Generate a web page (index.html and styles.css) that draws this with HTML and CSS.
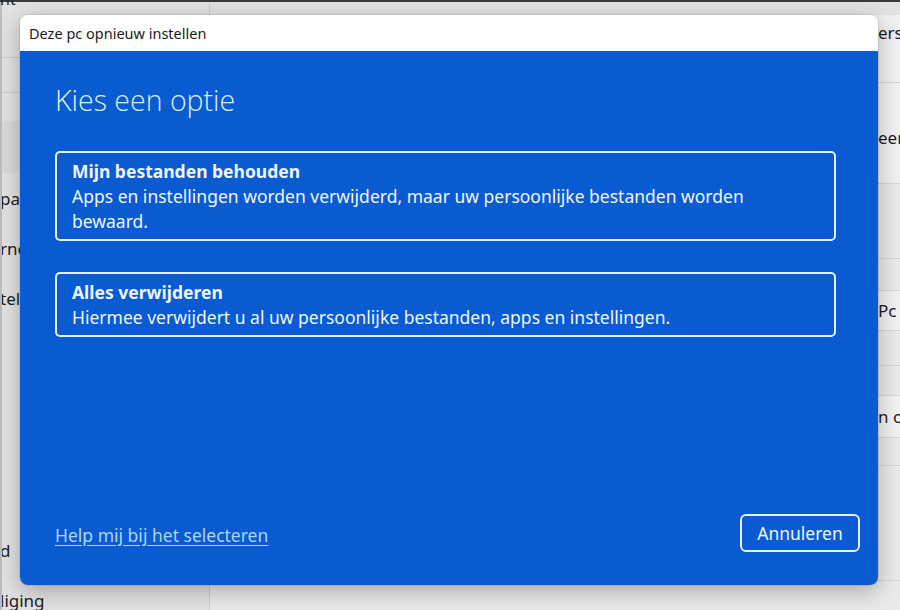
FILE: index.html
```html
<!DOCTYPE html>
<html lang="nl">
<head>
<meta charset="utf-8">
<title>Deze pc opnieuw instellen</title>
<link rel="stylesheet" href="styles.css">
</head>
<body>
<div class="page">
  <div class="topline"><span class="cut-top">nt</span></div>
  <div class="bg">
    <aside class="side">
      <div class="side-row h55"></div>
      <div class="side-row h36 line"></div>
      <div class="side-row h28"></div>
      <div class="side-row h52 band"></div>
      <div class="side-row h50"><span class="frag">pa</span></div>
      <div class="side-row h50"><span class="frag">rne</span></div>
      <div class="side-row h50"><span class="frag">tell</span></div>
      <div class="side-row h202"></div>
      <div class="side-row h50"><span class="frag">d</span></div>
      <div class="side-row h50"><span class="frag">liging</span></div>
    </aside>
    <main class="main">
      <div class="card h13 plain"></div>
      <div class="card h35"><span class="rfrag">erstellen</span></div>
      <div class="card h32"></div>
      <div class="card h33 sep"></div>
      <div class="card h45"><span class="rfrag">eem</span></div>
      <div class="card h23"></div>
      <div class="card h75 dim sep"></div>
      <div class="card h32 dim sep"></div>
      <div class="card h40 sep"><span class="rfrag">Pc opnieuw</span></div>
      <div class="card h35 dim sep"></div>
      <div class="card h30 dim sep"></div>
      <div class="card h42 sep"><span class="rfrag">n opnieuw</span></div>
      <div class="card h28 dim sep"></div>
      <div class="card h115 dim sep"></div>
      <div class="card h30 dim sep"></div>
    </main>
  </div>
</div>

<div class="dialog" role="dialog" aria-labelledby="dlg-title">
  <div class="titlebar" id="dlg-title">Deze pc opnieuw instellen</div>
  <div class="body">
    <h1 class="heading">Kies een optie</h1>
    <div class="options">
      <button class="option" type="button">
        <span class="opt-title">Mijn bestanden behouden</span>
        <span class="opt-desc">Apps en instellingen worden verwijderd, maar uw persoonlijke bestanden worden bewaard.</span>
      </button>
      <button class="option" type="button">
        <span class="opt-title">Alles verwijderen</span>
        <span class="opt-desc">Hiermee verwijdert u al uw persoonlijke bestanden, apps en instellingen.</span>
      </button>
    </div>
    <div class="footer">
      <a class="help" href="#">Help mij bij het selecteren</a>
      <button class="cancel" type="button">Annuleren</button>
    </div>
  </div>
</div>
</body>
</html>
```

FILE: styles.css
```css
* { box-sizing: border-box; }

html, body {
  margin: 0;
  padding: 0;
  width: 900px;
  height: 610px;
  overflow: hidden;
  font-family: "Noto Sans", "Open Sans", sans-serif;
  background: #e6e6e6;
  color: #1b1b1b;
}

.page {
  width: 900px;
  height: 610px;
  display: flex;
  flex-direction: column;
  overflow: hidden;
}

.topline {
  height: 2px;
  flex-shrink: 0;
  background: #3a3a3a;
  position: relative;
  overflow: visible;
}

.cut-top {
  position: absolute;
  left: 0;
  top: -12px;
  font-size: 16px;
  color: #222;
}

.bg {
  flex: 1;
  display: flex;
  min-height: 0;
}

.side {
  width: 210px;
  flex-shrink: 0;
  background: #e2e2e2;
  border-left: 2px solid #bdbdbd;
  border-right: 1px solid #cfcfcf;
  display: flex;
  flex-direction: column;
}

.side-row {
  display: flex;
  align-items: center;
  flex-shrink: 0;
  font-size: 17px;
  color: #1c1c1c;
  white-space: nowrap;
  overflow: hidden;
}

.side-row.line { border-top: 1px solid #cbcbcb; border-bottom: 1px solid #cbcbcb; }
.side-row.band { background: #dadada; }

.frag { margin-left: -2px; }

.h13 { height: 13px; }
.h23 { height: 23px; }
.h28 { height: 28px; }
.h30 { height: 30px; }
.h32 { height: 32px; }
.h33 { height: 33px; }
.h35 { height: 35px; }
.h36 { height: 36px; }
.h40 { height: 40px; }
.h42 { height: 42px; }
.h45 { height: 45px; }
.h50 { height: 50px; }
.h52 { height: 52px; }
.h55 { height: 55px; }
.h75 { height: 75px; }
.h115 { height: 115px; }
.h202 { height: 202px; }

.main {
  flex: 1;
  min-width: 0;
  display: flex;
  flex-direction: column;
  background: #e8e8e8;
}

.card {
  display: flex;
  align-items: center;
  flex-shrink: 0;
  background: #f1f1f1;
  font-size: 17px;
  color: #1c1c1c;
  white-space: nowrap;
  overflow: hidden;
  padding-left: 668px;
}

.rfrag { flex-shrink: 0; }

.card.plain { background: #e2e2e2; }
.card.dim { background: #e9e9e9; }
.card.sep { border-top: 1px solid #d6d6d6; }

.dialog {
  position: absolute;
  left: 20px;
  top: 15px;
  width: 858px;
  height: 570px;
  border-radius: 8px;
  overflow: hidden;
  display: flex;
  flex-direction: column;
  box-shadow: 0 6px 22px rgba(0, 0, 0, 0.28), 0 0 0 1px rgba(0, 0, 0, 0.08);
}

.titlebar {
  height: 36px;
  background: #ffffff;
  color: #1a1a1a;
  font-size: 14.5px;
  line-height: 36px;
  padding-left: 9px;
  flex-shrink: 0;
}

.body {
  flex: 1;
  background: #0a5ad2;
  display: flex;
  flex-direction: column;
  padding: 31px 18px 33px 35px;
  color: #eef6ff;
}

.heading {
  margin: 0;
  font-family: "Open Sans", "Noto Sans", sans-serif;
  font-weight: 300;
  font-size: 28.5px;
  line-height: 36px;
  color: #dcefff;
  letter-spacing: 0;
}

.options {
  margin-top: 33px;
  width: 781px;
  display: flex;
  flex-direction: column;
  gap: 31px;
}

.option {
  display: flex;
  flex-direction: column;
  align-items: flex-start;
  text-align: left;
  background: transparent;
  border: 2px solid #e3f3ff;
  border-radius: 5px;
  padding: 6px 30px 5px 15px;
  color: #eef6ff;
  font-family: "Noto Sans", "Open Sans", sans-serif;
  cursor: pointer;
}

.opt-title {
  font-weight: 700;
  font-size: 17.5px;
  line-height: 25px;
}

.opt-desc {
  font-size: 17.5px;
  line-height: 25px;
}

.footer {
  margin-top: auto;
  display: flex;
  align-items: center;
  justify-content: space-between;
}

.help {
  color: #a9d6ff;
  font-size: 17.5px;
  text-decoration: underline;
  text-underline-offset: 3px;
  margin-top: 3px;
}

.cancel {
  width: 120px;
  height: 38px;
  background: transparent;
  border: 2px solid #e3f3ff;
  border-radius: 6px;
  color: #eef6ff;
  font-family: "Noto Sans", "Open Sans", sans-serif;
  font-size: 17.5px;
  cursor: pointer;
}
```
